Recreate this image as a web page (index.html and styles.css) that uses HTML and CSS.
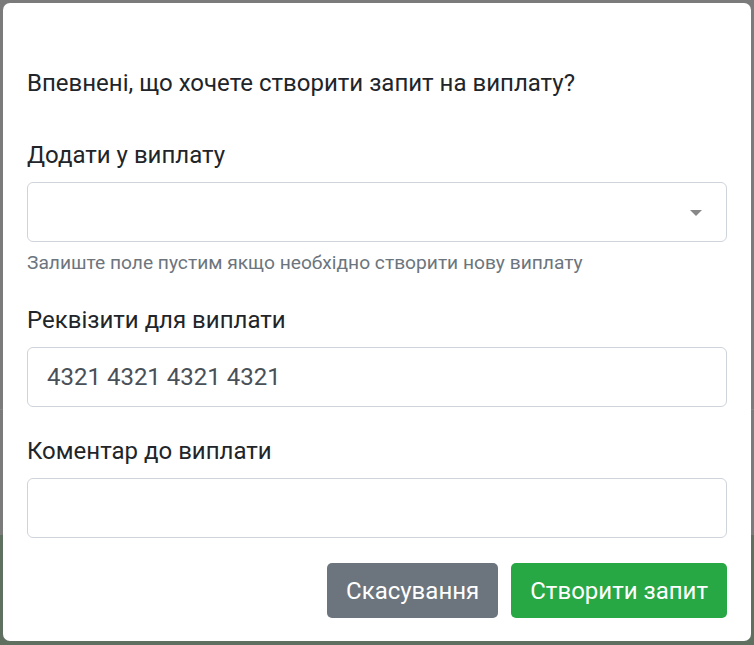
FILE: index.html
```html
<!DOCTYPE html>
<html lang="uk">
<head>
<meta charset="utf-8">
<link rel="stylesheet" href="styles.css">
</head>
<body>
<div class="modal">
  <p class="question">Впевнені, що хочете створити запит на виплату?</p>
  <div class="group group-first">
    <label class="label">Додати у виплату</label>
    <div class="select">
      <span class="caret"></span>
    </div>
    <div class="help">Залиште поле пустим якщо необхідно створити нову виплату</div>
  </div>
  <div class="group group-second">
    <label class="label">Реквізити для виплати</label>
    <div class="input">4321 4321 4321 4321</div>
  </div>
  <div class="group group-last">
    <label class="label">Коментар до виплати</label>
    <div class="input"></div>
  </div>
  <div class="actions">
    <button class="btn btn-grey">Скасування</button>
    <button class="btn btn-green">Створити запит</button>
  </div>
</div>
</body>
</html>
```
FILE: styles.css
```css
html, body {
  margin: 0;
  padding: 0;
}
body {
  width: 754px;
  height: 645px;
  overflow: hidden;
  background: linear-gradient(to bottom, #7b7b7b 0, #7b7b7b 409px, #868686 409px, #868686 410px, #7b7b7b 410px, #7b7b7b 535px, #5f6f60 535px);
  font-family: Roboto, "Noto Sans", sans-serif;
  color: #212529;
  padding: 3px;
  box-sizing: border-box;
}
.modal {
  background: #fff;
  border-radius: 7px;
  height: 638px;
  box-sizing: border-box;
  padding: 62px 24px 24px 24px;
  display: flex;
  flex-direction: column;
}
.question {
  margin: 0 0 36px 0;
  font-size: 24px;
  line-height: 36px;
}
.group {
  display: flex;
  flex-direction: column;
}
.group-first { margin-bottom: 25px; }
.group-second { margin-bottom: 26px; }
.group-last { margin-bottom: 24px; }
.label {
  font-size: 24px;
  line-height: 36px;
  margin-bottom: 9px;
}
.select, .input {
  height: 60px;
  box-sizing: border-box;
  border: 1px solid #ced4da;
  border-radius: 6px;
  padding: 0 19px;
  display: flex;
  align-items: center;
  font-size: 24px;
  color: #495057;
}
.select {
  justify-content: flex-end;
  padding-right: 24px;
}
.caret {
  width: 0;
  height: 0;
  border-left: 6px solid transparent;
  border-right: 6px solid transparent;
  border-top: 6px solid #888;
  margin-top: 1px;
}
.help {
  margin-top: 6px;
  font-size: 19.2px;
  line-height: 29px;
  color: #6c757d;
}
.actions {
  display: flex;
  justify-content: flex-end;
  gap: 13px;
  padding-top: 1px;
}
.btn {
  height: 55px;
  border: none;
  border-radius: 5px;
  font-family: Roboto, "Noto Sans", sans-serif;
  font-size: 24px;
  color: #fff;
  padding: 0 19px;
}
.btn-grey { background: #6c757d; }
.btn-green { background: #28a745; }
```
